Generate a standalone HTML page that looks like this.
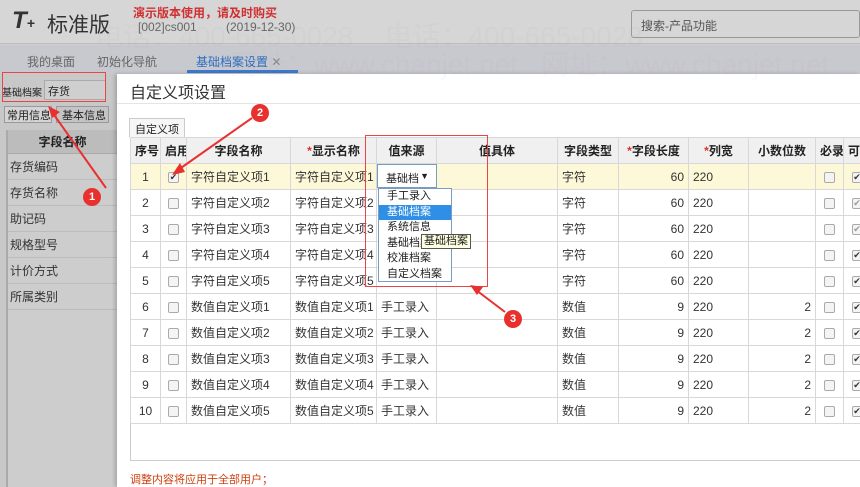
<!DOCTYPE html>
<html><head><meta charset="utf-8"><style>
*{margin:0;padding:0;box-sizing:border-box}
body{width:860px;height:487px;overflow:hidden;position:relative;background:#cfcfcf;font-family:"Liberation Sans","Noto Sans CJK SC",sans-serif;font-size:12px;color:#222}
.abs{position:absolute}
table{border-collapse:collapse;table-layout:fixed}
td,th{border:1px solid #d8d8d8;height:26px;font-size:12px;white-space:nowrap;overflow:hidden;padding:0 4px;color:#333}
th{background:#f0f0f0;font-weight:bold;color:#222}
.r{text-align:right}.c{text-align:center}
.cb{display:inline-block;width:11px;height:11px;border:1px solid #aaa;border-radius:2px;background:#f4f4f4;vertical-align:middle}
.red{color:#e03030}
.ann{border:1.5px solid #e84545}
.dot{position:absolute;width:18px;height:18px;border-radius:50%;background:#e8312f;color:#fff;font-size:11px;font-weight:bold;text-align:center;line-height:18px}
.li{position:absolute;left:8px;width:109px;height:26px;border-bottom:1px solid #bcbcbc;padding-left:2px;line-height:26px;font-size:12px;color:#333}
</style></head><body>
<div class="abs" style="left:0;top:0;width:860px;height:44px;background:#d6d6d6;border-bottom:1px solid #bbb"></div>
<div class="abs" style="left:12px;top:7px;font-size:24px;font-weight:bold;color:#333;font-style:italic">T<span style="font-size:14px">+</span></div>
<div class="abs" style="left:47px;top:9px;font-size:21px;color:#333">标准版</div>
<div class="abs" style="left:133px;top:4px;font-size:12px;color:#d03030;font-weight:bold">演示版本使用，请及时购买</div>
<div class="abs" style="left:138px;top:20px;font-size:12px;color:#666">[002]cs001</div>
<div class="abs" style="left:226px;top:20px;font-size:12px;color:#666">(2019-12-30)</div>
<div class="abs" style="left:631px;top:10px;width:229px;height:28px;border:1px solid #999;border-radius:3px;background:#d6d6d6;padding:6px 9px;color:#555">搜索-产品功能</div>
<div class="abs" style="left:0;top:45px;width:860px;height:29px;background:#c8c8cf"></div>
<div class="abs" style="left:27px;top:53px;color:#666">我的桌面</div>
<div class="abs" style="left:97px;top:53px;color:#666">初始化导航</div>
<div class="abs" style="left:196px;top:53px;color:#2a6ec0">基础档案设置 <span style="color:#888">✕</span></div>
<div class="abs" style="left:187px;top:70px;width:111px;height:3px;background:#3b7ad0"></div>
<div class="abs" style="left:0;top:74px;width:117px;height:413px;background:#c8c8c8"></div>
<div class="abs" style="left:2px;top:84px;font-size:10px;color:#222">基础档案</div>
<div class="abs" style="left:44px;top:80px;width:62px;height:20px;background:#cfcfcf;border:1px solid #aaa;padding:2px 3px;font-size:11px">存货</div>
<div class="abs ann" style="left:2px;top:72px;width:104px;height:30px"></div>
<div class="abs" style="left:4px;top:106px;width:48px;height:17px;border:1px solid #999;font-size:11px;padding-left:2px;background:#d4d4d4">常用信息</div>
<div class="abs" style="left:56px;top:106px;width:53px;height:17px;border:1px solid #999;font-size:11px;padding-left:5px;background:#c4c4c4">基本信息</div>
<div class="abs" style="left:8px;top:130px;width:109px;height:357px;background:#cdcdcd"></div>
<div class="abs" style="left:8px;top:130px;width:109px;height:24px;background:#bcbcbc;border-bottom:1px solid #aaa;text-align:center;line-height:24px;font-weight:bold">字段名称</div>
<div class="abs" style="left:6px;top:130px;width:2px;height:357px;background:#aaa"></div>
<div class="li" style="top:154px">存货编码</div>
<div class="li" style="top:180px">存货名称</div>
<div class="li" style="top:206px">助记码</div>
<div class="li" style="top:232px">规格型号</div>
<div class="li" style="top:258px">计价方式</div>
<div class="li" style="top:284px">所属类别</div>
<div class="abs" style="left:117px;top:74px;width:743px;height:413px;background:#fff;box-shadow:-2px 0 4px rgba(0,0,0,.2)"></div>
<div class="abs" style="left:130px;top:79px;font-size:16px;color:#333">自定义项设置</div>
<div class="abs" style="left:117px;top:103px;width:743px;height:1px;background:#e4e4e4"></div>
<div class="abs" style="left:129px;top:118px;width:56px;height:19px;border:1px solid #ccc;border-bottom:none;background:#f6f6f6;font-size:11px;padding:2px 5px">自定义项</div>
<div class="abs" style="left:130px;top:137px;width:730px;height:324px;border:1px solid #ccc;border-right:none"></div>
<table class="abs" style="left:130px;top:137px;width:740px">
<colgroup><col style="width:30px"><col style="width:26px"><col style="width:104px"><col style="width:86px"><col style="width:60px"><col style="width:121px"><col style="width:61px"><col style="width:70px"><col style="width:60px"><col style="width:67px"><col style="width:28px"><col style="width:27px"></colgroup>
<tr><th>序号</th><th>启用</th><th>字段名称</th><th><span class="red">*</span>显示名称</th><th>值来源</th><th>值具体</th><th>字段类型</th><th><span class="red">*</span>字段长度</th><th><span class="red">*</span>列宽</th><th>小数位数</th><th>必录</th><th>可改</th></tr>
<tr style="background:#fdf8d8"><td class="c">1</td><td class="c"><span class="cb" style="text-align:center;font-size:9px;line-height:9px">✔</span></td><td>字符自定义项1</td><td>字符自定义项1</td><td></td><td></td><td>字符</td><td class="r">60</td><td>220</td><td></td><td class="c"><span class="cb"></span></td><td class="c"><span class="cb" style="font-size:9px;line-height:9px">✔</span></td></tr>
<tr><td class="c">2</td><td class="c"><span class="cb"></span></td><td>字符自定义项2</td><td>字符自定义项2</td><td></td><td></td><td>字符</td><td class="r">60</td><td>220</td><td></td><td class="c"><span class="cb"></span></td><td class="c"><span class="cb" style="font-size:9px;line-height:9px;color:#999">✔</span></td></tr>
<tr><td class="c">3</td><td class="c"><span class="cb"></span></td><td>字符自定义项3</td><td>字符自定义项3</td><td></td><td></td><td>字符</td><td class="r">60</td><td>220</td><td></td><td class="c"><span class="cb"></span></td><td class="c"><span class="cb" style="font-size:9px;line-height:9px;color:#999">✔</span></td></tr>
<tr><td class="c">4</td><td class="c"><span class="cb"></span></td><td>字符自定义项4</td><td>字符自定义项4</td><td></td><td></td><td>字符</td><td class="r">60</td><td>220</td><td></td><td class="c"><span class="cb"></span></td><td class="c"><span class="cb" style="font-size:9px;line-height:9px">✔</span></td></tr>
<tr><td class="c">5</td><td class="c"><span class="cb"></span></td><td>字符自定义项5</td><td>字符自定义项5</td><td></td><td></td><td>字符</td><td class="r">60</td><td>220</td><td></td><td class="c"><span class="cb"></span></td><td class="c"><span class="cb" style="font-size:9px;line-height:9px">✔</span></td></tr>
<tr><td class="c">6</td><td class="c"><span class="cb"></span></td><td>数值自定义项1</td><td>数值自定义项1</td><td>手工录入</td><td></td><td>数值</td><td class="r">9</td><td>220</td><td class="r">2</td><td class="c"><span class="cb"></span></td><td class="c"><span class="cb" style="font-size:9px;line-height:9px">✔</span></td></tr>
<tr><td class="c">7</td><td class="c"><span class="cb"></span></td><td>数值自定义项2</td><td>数值自定义项2</td><td>手工录入</td><td></td><td>数值</td><td class="r">9</td><td>220</td><td class="r">2</td><td class="c"><span class="cb"></span></td><td class="c"><span class="cb" style="font-size:9px;line-height:9px">✔</span></td></tr>
<tr><td class="c">8</td><td class="c"><span class="cb"></span></td><td>数值自定义项3</td><td>数值自定义项3</td><td>手工录入</td><td></td><td>数值</td><td class="r">9</td><td>220</td><td class="r">2</td><td class="c"><span class="cb"></span></td><td class="c"><span class="cb" style="font-size:9px;line-height:9px">✔</span></td></tr>
<tr><td class="c">9</td><td class="c"><span class="cb"></span></td><td>数值自定义项4</td><td>数值自定义项4</td><td>手工录入</td><td></td><td>数值</td><td class="r">9</td><td>220</td><td class="r">2</td><td class="c"><span class="cb"></span></td><td class="c"><span class="cb" style="font-size:9px;line-height:9px">✔</span></td></tr>
<tr><td class="c">10</td><td class="c"><span class="cb"></span></td><td>数值自定义项5</td><td>数值自定义项5</td><td>手工录入</td><td></td><td>数值</td><td class="r">9</td><td>220</td><td class="r">2</td><td class="c"><span class="cb"></span></td><td class="c"><span class="cb" style="font-size:9px;line-height:9px">✔</span></td></tr>
</table>
<div class="abs" style="left:377px;top:164px;width:60px;height:24px;border:1px solid #7a9cc0;background:#fff;font-size:11px;padding:5px 8px">基础档 <span style="position:absolute;right:7px;top:6px;font-size:9px">▼</span></div>
<div class="abs" style="left:378px;top:188px;width:74px;height:94px;border:1px solid #7a9cc0;background:#fff;font-size:11px;line-height:15.5px">
<div style="padding-left:8px">手工录入</div>
<div style="padding-left:8px;background:#2f8fe6;color:#fff">基础档案</div>
<div style="padding-left:8px">系统信息</div>
<div style="padding-left:8px">基础档案</div>
<div style="padding-left:8px">校准档案</div>
<div style="padding-left:8px">自定义档案</div>
</div>
<div class="abs" style="left:421px;top:234px;border:1px solid #555;background:#ffffe1;font-size:11px;padding:0 2px;line-height:13px">基础档案</div>
<div class="abs ann" style="left:365px;top:135px;width:123px;height:152px"></div>
<svg class="abs" style="left:0;top:0" width="860" height="487">
<g stroke="#e8312f" stroke-width="2" fill="#e8312f">
<line x1="106" y1="188" x2="52" y2="112"/><polygon points="48,106 60,112 52,118" stroke="none"/>
<line x1="252" y1="118" x2="178" y2="170"/><polygon points="172,175 180,163 185,172" stroke="none"/>
<line x1="505" y1="312" x2="476" y2="290"/><polygon points="470,285 483,287 477,295" stroke="none"/>
</g></svg>
<div class="dot" style="left:83px;top:188px">1</div>
<div class="dot" style="left:251px;top:104px">2</div>
<div class="dot" style="left:504px;top:310px">3</div>
<div class="abs" style="left:130px;top:471px;font-size:11px;color:#d04010">调整内容将应用于全部用户；</div>
<div class="abs" style="left:95px;top:15px;font-size:28px;color:rgba(150,150,150,.06);white-space:nowrap">电话：400-665-0028 &nbsp; &nbsp;电话：400-665-0028</div>
<div class="abs" style="left:230px;top:43px;font-size:28px;color:rgba(150,150,150,.06);white-space:nowrap">网址：www.chanjet.net &nbsp; 网址：www.chanjet.net</div>
</body></html>
